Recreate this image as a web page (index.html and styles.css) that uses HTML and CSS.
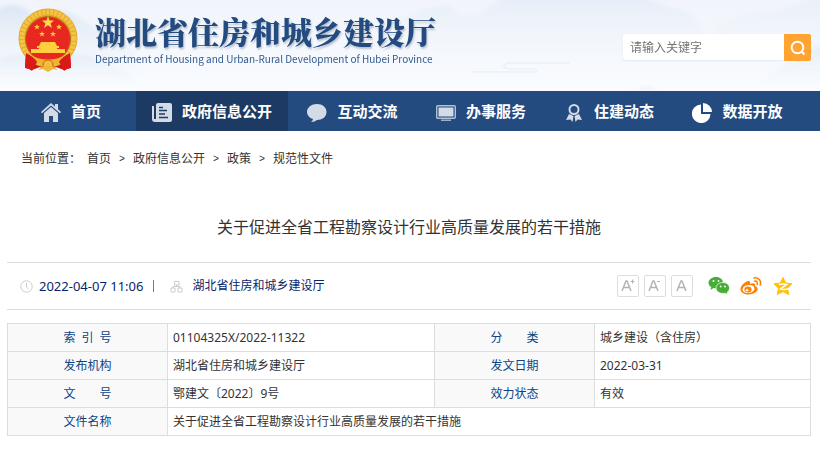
FILE: index.html
```html
<!DOCTYPE html>
<html lang="zh-CN">
<head>
<meta charset="utf-8">
<meta name="viewport" content="width=device-width, initial-scale=1">
<title>湖北省住房和城乡建设厅</title>
<link rel="stylesheet" href="styles.css">
</head>
<body>
<header class="banner">
  <svg class="scenery" viewBox="0 0 820 91" preserveAspectRatio="xMidYMid slice" aria-hidden="true">
    <defs>
      <linearGradient id="hill" x1="0" y1="0" x2="0" y2="1">
        <stop offset="0" stop-color="#dae6f3"/>
        <stop offset="1" stop-color="#f4f7fc" stop-opacity="0"/>
      </linearGradient>
      <filter id="mist"><feGaussianBlur stdDeviation="2"/></filter>
    </defs>
    <g fill="url(#hill)" filter="url(#mist)">
      <path d="M-10 15C-2 10 4 4 14 5C26 5 30 15 42 18C55 8 66 9 76 17C92 24 100 36 126 42L150 80H-10Z"/>
      <path opacity=".5" d="M-10 62C20 48 48 56 72 54C92 52 104 66 130 72L140 91H-10Z"/>
      <path opacity=".5" d="M400 18L425 9L448 5L462 16L480 14L492 4L508 -4H640C670 10 690 8 700 24L720 60H420Z"/>
      <path opacity=".4" d="M690 48C716 30 728 14 760 12C790 10 800 2 830 -6V60H690Z"/>
      <path opacity=".7" d="M745 91C770 78 782 60 830 42V91Z"/>
      <path d="M626 91Q648 84 662 91Z"/>
    </g>
    <path d="M472 72H534Q540 71 534 69H508Q499 66 508 63H570" fill="none" stroke="#e3edf6"/>
  </svg>
  <div class="brand">
    <svg class="emblem" viewBox="0 0 60 64" role="img" aria-label="国徽">
      <path d="M8 44L7 60L14 62L22 59L30 63L38 59L46 62L53 60L52 44Z" fill="#c91516"/>
      <circle cx="30" cy="30" r="29.500" fill="#e6a72b"/>
      <circle cx="30" cy="30" r="26" fill="none" stroke="#f3c544" stroke-width="5" stroke-dasharray="3 1"/>
      <circle cx="30" cy="31" r="22.500" fill="#e82820" stroke="#b8741d"/>
      <path d="M30 8L31.500 12.500H36L32.500 15.500L34 20L30 17.200L26 20L27.500 15.500L24 12.500H28.500Z" fill="#ffd94c"/>
      <g fill="#ffcf3e">
        <path id="star" d="M19 16L19.700 18H22L20.200 19.300L21 21.500L19 20.200L17 21.500L17.800 19.300L16 18H18.300Z"/>
        <use href="#star" x="22"/><use href="#star" x="5" y="7"/><use href="#star" x="16" y="7"/>
        <path d="M23 34H37L39 38H21ZM19 38H41V40H19ZM21 40H39V44H21ZM13 41H47V45H13Z"/>
      </g>
      <path d="M10 46Q30 57 50 46L46 53Q30 61 14 53Z" fill="#efb32e"/>
      <path d="M8 45Q16 49 19 54L14 63L7 58ZM52 45Q44 49 41 54L46 63L53 58Z" fill="#da1a18"/>
      <circle cx="30" cy="57" r="5" fill="#f4bd3b" stroke="#b66a18"/>
      <path d="M20 62Q30 53 40 62L35 61L30 64L25 61Z" fill="#f0b835"/>
    </svg>
    <div class="brand-text">
      <h1 class="name">湖北省住房和城乡建设厅</h1>
      <p class="name-en">Department of Housing and Urban-Rural Development of Hubei Province</p>
    </div>
  </div>
  <form class="search">
    <input class="search-box" type="text" placeholder="请输入关键字" aria-label="请输入关键字">
    <button class="search-button" type="submit" aria-label="搜索">
      <svg viewBox="0 0 16 16" width="16" height="16" fill="none" stroke="#fff" stroke-width="2"><circle cx="7.500" cy="7.500" r="5.800"/><path d="M11 11L14.500 14.500"/></svg>
    </button>
  </form>
</header>

<nav class="nav">
  <a class="nav-item" href="#">
    <svg class="nav-icon" viewBox="0 0 20 20"><path d="M0 9L10 0L14 3.500V1H17V6.200L20 9L19 10.200L10 2.500L1 10.200Z"/><path d="M3 10L10 4L17 10V19H12V13H8V19H3Z"/></svg>首页</a>
  <a class="nav-item active" href="#">
    <svg class="nav-icon" viewBox="0 0 20 20"><path d="M6 0H18Q20 0 20 2V17Q20 19 18 19H3Q0 19 0 16V3H2V16H4V2Q4 0 6 0Z"/><path d="M7 4.500H11M7 7.500H15M7 11H13M7 14.500H16" stroke="#1c3a63" stroke-width="1.400"/></svg>政府信息公开</a>
  <a class="nav-item" href="#">
    <svg class="nav-icon" viewBox="0 0 20 20"><path d="M10 1C15.500 1 19.500 4.500 19.500 9C19.500 14 15 17 10 17Q8 19 4 19Q6 17.500 6 16C2.500 15 0 12 0 9C0 4.500 4.500 1 10 1Z"/></svg>互动交流</a>
  <a class="nav-item" href="#">
    <svg class="nav-icon" viewBox="0 0 20 20"><rect x=".7" y="2.700" width="18.600" height="12.600" rx="1" fill="none" stroke="#b3c1d4" stroke-width="1.400"/><path d="M2.500 4.500H17.500V13.500H2.500Z"/><path d="M5 16.500H15V18H5Z" fill="#9eb1c9"/></svg>办事服务</a>
  <a class="nav-item" href="#">
    <svg class="nav-icon" viewBox="0 0 20 20"><circle cx="10" cy="6.500" r="4.500" fill="none" stroke="#d3dbe7" stroke-width="2"/><path d="M5 11L9.500 13L8.500 19L6.500 16.500L2 17ZM15 11L10.500 13L11.500 19L13.500 16.500L18 17Z"/></svg>住建动态</a>
  <a class="nav-item" href="#">
    <svg class="nav-icon bright" viewBox="0 0 20 20"><path d="M9 1.500V11H18.500A9.300 9.300 0 1 1 9 1.500Z"/><path d="M11 0A9.200 9.200 0 0 1 20 9H11Z"/></svg>数据开放</a>
</nav>

<main class="page">
  <div class="crumbs">
    <span class="crumbs-label">当前位置：</span>
    <a href="#">首页</a><span class="sep">&gt;</span>
    <a href="#">政府信息公开</a><span class="sep">&gt;</span>
    <a href="#">政策</a><span class="sep">&gt;</span>
    <a href="#">规范性文件</a>
  </div>

  <h2 class="title">关于促进全省工程勘察设计行业高质量发展的若干措施</h2>

  <div class="meta">
    <svg class="meta-icon" viewBox="0 0 13 13"><circle cx="6.500" cy="6.500" r="5.700"/><path d="M6.500 3V7L8.500 9"/></svg>
    <time class="date">2022-04-07 11:06</time>
    <span class="bar"></span>
    <svg class="meta-icon" viewBox="0 0 13 13"><path d="M4.500 1.500H9V5H4.500ZM1 8H5V12H1ZM8 8H12V12H8ZM6.500 5V7M3 8V6.500H10V8"/></svg>
    <span class="source">湖北省住房和城乡建设厅</span>
    <div class="sizes">
      <button class="size" type="button" aria-label="放大字号"><svg viewBox="0 0 20 20"><path d="M4 15L8 5H9L13 15M5.500 11.500H11.500" stroke-width="1.500"/><path d="M12.500 5.500H16.500M14.500 3.500V7.500"/></svg></button>
      <button class="size" type="button" aria-label="缩小字号"><svg viewBox="0 0 20 20"><path d="M4 15L8 5H9L13 15M5.500 11.500H11.500" stroke-width="1.500"/><path d="M12 5.500H15"/></svg></button>
      <button class="size" type="button" aria-label="默认字号"><svg viewBox="0 0 20 20"><path d="M5 15L9 5H10L14 15M6.500 11.500H12.500" stroke-width="1.500"/></svg></button>
    </div>
    <div class="share">
      <a href="#" aria-label="微信"><svg viewBox="0 0 22 20"><g fill="#46ad35"><path d="M8 1C12.200 1 15 3.500 15 6.500C15 10 12 12.500 8 12.500L5.500 12L2.500 14L3.300 11C1.500 10 .5 8.500 .5 6.500C.5 3.500 4 1 8 1Z"/><path stroke="#fff" stroke-width=".7" d="M15 6.500C19 6.500 21.500 9 21.500 12C21.500 14 20.500 15.300 19.300 16.200L19.700 18.500L17.300 17.200C12 18.300 8 15.500 8 12C8 9 11 6.500 15 6.500Z"/></g><g fill="#fff"><circle cx="5.500" cy="5" r="1"/><circle cx="10.500" cy="5" r="1"/><circle cx="12.700" cy="10.500" r=".9"/><circle cx="17" cy="10.500" r=".9"/></g></svg></a>
      <a href="#" aria-label="微博"><svg viewBox="0 0 22 20"><path fill="#ff8200" d="M8 5C10 4.500 10.500 6 10 8C13 6.500 16 7 15 10C18 11 18.500 13.500 16.500 15.500C12.500 20 1 19.500 .5 13.500C.3 10 4.500 6 8 5Z"/><ellipse cx="8.500" cy="13" rx="6" ry="4" fill="#fff" transform="rotate(-8 8.500 13)"/><ellipse cx="8" cy="13.500" rx="3.600" ry="3" fill="#ff8200"/><circle cx="7" cy="14.200" r="1.200" fill="#fff"/><path fill="none" stroke="#ff8200" stroke-width="1.600" stroke-linecap="round" d="M14 2Q17.500 1 19.700 4Q21.200 6.500 20.200 9M14.500 5.200Q17.800 4.800 17.300 8.300"/></svg></a>
      <a href="#" aria-label="QQ空间"><svg viewBox="0 0 22 20"><path fill="#ffc20a" stroke="#ffc20a" stroke-linejoin="round" d="M11 1.500L13.700 7L20 7.800L15.500 12.200L16.700 18.500L11 15.600L5.300 18.500L6.500 12.200L2 7.800L8.300 7Z"/><path fill="none" stroke="#fff" stroke-width="1.500" d="M7 8.500Q11 7.700 14.500 8.500L8.500 13Q12 14 18 12.500"/></svg></a>
    </div>
  </div>

  <table class="info">
    <colgroup><col class="col-label"><col class="col-wide"><col class="col-label"><col></colgroup>
    <tr><th scope="row"><span class="spread"><i>索</i><i>引</i><i>号</i></span></th><td>01104325X/2022-11322</td><th scope="row"><span class="spread"><i>分</i><i>类</i></span></th><td>城乡建设（含住房）</td></tr>
    <tr><th scope="row">发布机构</th><td>湖北省住房和城乡建设厅</td><th scope="row">发文日期</th><td>2022-03-31</td></tr>
    <tr><th scope="row"><span class="spread"><i>文</i><i>号</i></span></th><td>鄂建文〔2022〕9号</td><th scope="row">效力状态</th><td>有效</td></tr>
    <tr><th scope="row">文件名称</th><td colspan="3">关于促进全省工程勘察设计行业高质量发展的若干措施</td></tr>
  </table>
</main>
</body>
</html>
```
FILE: styles.css
```css
* {
  box-sizing: border-box;
}

body {
  margin: 0;
  background: #fff;
  color: #333;
  font: 12px/20px "Noto Sans", "Noto Sans CJK SC", sans-serif;
}

a {
  color: inherit;
  text-decoration: none;
}

.banner {
  position: relative;
  display: flex;
  align-items: flex-start;
  justify-content: space-between;
  height: 91px;
  padding: 8px 9px 0 18px;
  background: linear-gradient(#f1f5fb, #f5f8fd 60%, #fafcff);
  overflow: hidden;
}

.scenery {
  position: absolute;
  inset: 0;
  width: 100%;
  height: 100%;
}

.brand {
  position: relative;
  display: flex;
  gap: 17px;
}

.emblem {
  width: 60px;
  height: 64px;
}

.name {
  margin: 0;
  padding-top: 4px;
  color: #234b7f;
  font: 900 31px/38px "Noto Serif CJK SC", "Noto Sans CJK SC", serif;
  text-shadow: 1px 2px 2px #b9c3d0;
  white-space: nowrap;
}

.name-en {
  margin: 0;
  color: #315b8f;
  font: 10px/18px "Noto Sans CJK SC", sans-serif;
  white-space: nowrap;
}

.search {
  position: relative;
  display: flex;
  width: 188px;
  margin-top: 26px;
}

.search-box {
  flex: 1;
  min-width: 0;
  height: 26px;
  padding: 0 7px;
  border: 0;
  border-radius: 2px 0 0 2px;
  background: #fff;
  box-shadow: 0 1px 2px #e3e9f2;
  font: inherit;
}

.search-box::placeholder {
  color: #757575;
}

.search-button {
  display: grid;
  place-items: center;
  width: 27px;
  height: 27px;
  padding: 0;
  border: 0;
  border-radius: 0 2px 2px 0;
  background: #ffa433;
}

.nav {
  display: grid;
  grid-template-columns: 130fr 152fr 129fr 128fr 128fr 129fr;
  height: 40px;
  padding: 0 18px 0 6px;
  background: #234b7f;
}

.nav-item {
  display: flex;
  align-items: center;
  justify-content: center;
  gap: 10px;
  color: #fff;
  font-size: 15px;
  font-weight: 700;
  white-space: nowrap;
}

.nav-item.active {
  background: #1c3a63;
}

.nav-icon {
  width: 20px;
  height: 20px;
  margin-top: 4px;
  fill: #d3dbe7;
}

.nav-icon.bright {
  fill: #fff;
}

.page {
  padding: 0 9px 14px 7px;
}

.crumbs {
  display: flex;
  gap: 8px;
  padding: 18px 14px 0;
}

.crumbs-label {
  margin-right: -2px;
}

.sep {
  font-family: "Liberation Mono", monospace;
  font-size: 10px;
  line-height: 22px;
}

.title {
  margin: 42px 0 21px;
  font-size: 16px;
  font-weight: 400;
  line-height: 28px;
  text-align: center;
}

.meta {
  display: flex;
  align-items: center;
  height: 48px;
  padding: 0 17px 0 13px;
  border: solid #ddd;
  border-width: 1px 0;
  color: #0a246a;
}

.meta-icon {
  width: 13px;
  height: 13px;
  fill: none;
  stroke: #ccc;
}

.date {
  margin-left: 6px;
  font-size: 13px;
}

.bar {
  width: 1px;
  height: 12px;
  margin: 0 16px 0 10px;
  background: #2f8fdc;
}

.source {
  margin-left: 9px;
}

.sizes {
  display: flex;
  gap: 5px;
  margin-left: auto;
}

.size {
  width: 22px;
  height: 22px;
  padding: 0;
  border: 1px solid #ddd;
  border-radius: 2px;
  background: #fff;
}

.size svg {
  display: block;
  width: 20px;
  height: 20px;
  fill: none;
  stroke: #b3b3b3;
}

.share {
  display: flex;
  gap: 10px;
  margin-left: 15px;
}

.share svg {
  display: block;
  width: 22px;
  height: 20px;
}

.info {
  width: 100%;
  margin-top: 13px;
  border-collapse: collapse;
  table-layout: fixed;
}

.col-label {
  width: 160px;
}

.col-wide {
  width: 267px;
}

.info th,
.info td {
  height: 28px;
  padding: 0 5px;
  border: 1px solid #ddd;
  text-align: left;
}

.info th {
  background: #f9f9f9;
  color: #0b4386;
  font-weight: 400;
  text-align: center;
}

.spread {
  display: inline-flex;
  justify-content: space-between;
  width: 48px;
}

.spread i {
  font-style: normal;
}
```
